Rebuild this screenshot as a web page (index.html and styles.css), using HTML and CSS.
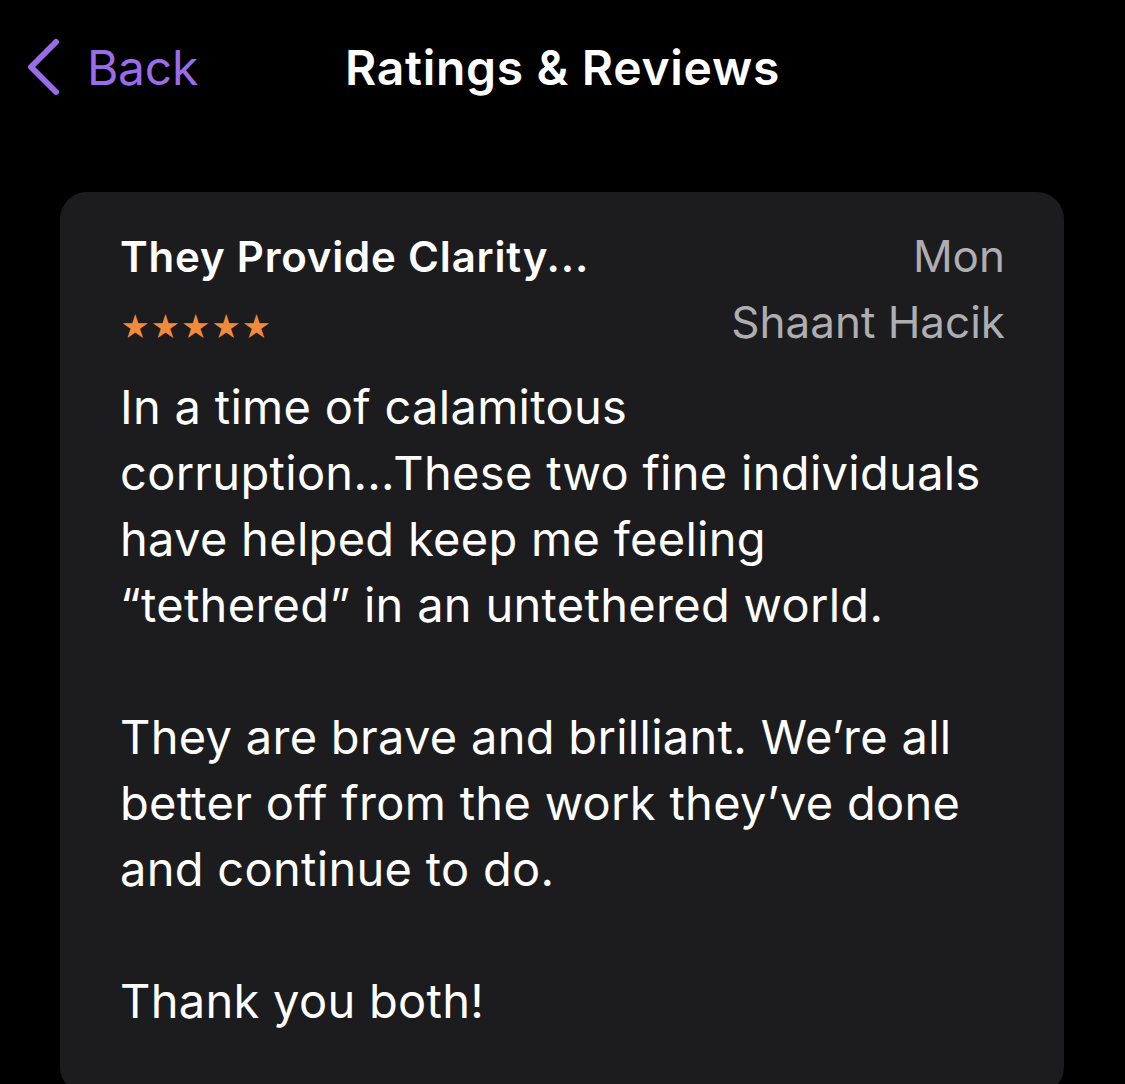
FILE: index.html
```html
<!DOCTYPE html>
<html>
<head>
<meta charset="utf-8">
<link rel="stylesheet" href="styles.css">
</head>
<body>
<div class="screen">
  <header class="nav">
    <div class="back">
      <svg class="chev" width="34" height="58" viewBox="0 0 34 58"><path d="M30 4 L5 29 L30 54" fill="none" stroke="#9b6ce9" stroke-width="6" stroke-linecap="round" stroke-linejoin="round"/></svg>
      <span class="back-label">Back</span>
    </div>
    <h1 class="title">Ratings &amp; Reviews</h1>
    <div class="spacer"></div>
  </header>
  <main class="card">
    <div class="card-head">
      <div class="head-left">
        <div class="review-title">They Provide Clarity...</div>
        <div class="stars">★★★★★</div>
      </div>
      <div class="head-right">
        <div class="date">Mon</div>
        <div class="author">Shaant Hacik</div>
      </div>
    </div>
    <div class="body">
      <p>In a time of calamitous corruption...These two fine individuals have helped keep me feeling “tethered” in an untethered world.</p>
      <p>They are brave and brilliant. We’re all better off from the work they’ve done and continue to do.</p>
      <p>Thank you both!</p>
    </div>
  </main>
</div>
</body>
</html>
```
FILE: styles.css
```css
html, body {
  margin: 0;
  padding: 0;
  background: #000;
}
body {
  font-family: Inter, "Noto Sans", sans-serif;
  color: #fff;
  width: 1125px;
  height: 1084px;
  overflow: hidden;
}
.screen {
  display: flex;
  flex-direction: column;
}
.nav {
  display: grid;
  grid-template-columns: 1fr auto 1fr;
  align-items: center;
  height: 134px;
}
.back {
  display: flex;
  align-items: center;
  gap: 27px;
  padding-left: 26px;
  color: #9b6ce9;
}
.chev {
  display: block;
}
.back-label {
  font-size: 48px;
  font-weight: 400;
  letter-spacing: -0.3px;
}
.title {
  margin: 0;
  font-size: 48px;
  font-weight: 600;
  letter-spacing: 0.7px;
}
.card {
  margin: 58px 61px 0 60px;
  background: #1c1c1e;
  border-radius: 27px;
  padding: 35px 59px 60px 60px;
}
.card-head {
  display: flex;
  justify-content: space-between;
  align-items: flex-start;
}
.review-title {
  font-size: 42px;
  font-weight: 600;
  line-height: 60px;
  letter-spacing: 0.8px;
}
.stars {
  color: #f08a3c;
  font-size: 29px;
  line-height: 40px;
  margin-top: 21px;
}
.head-right {
  text-align: right;
  color: #aeaeb2;
  font-size: 44px;
  line-height: 66px;
  margin-top: -4px;
}
.body {
  margin-top: 19px;
  font-size: 47px;
  line-height: 66px;
  letter-spacing: 0.3px;
}
.body p {
  margin: 0 0 66px 0;
}
.body p:last-child {
  margin-bottom: 0;
}
```
